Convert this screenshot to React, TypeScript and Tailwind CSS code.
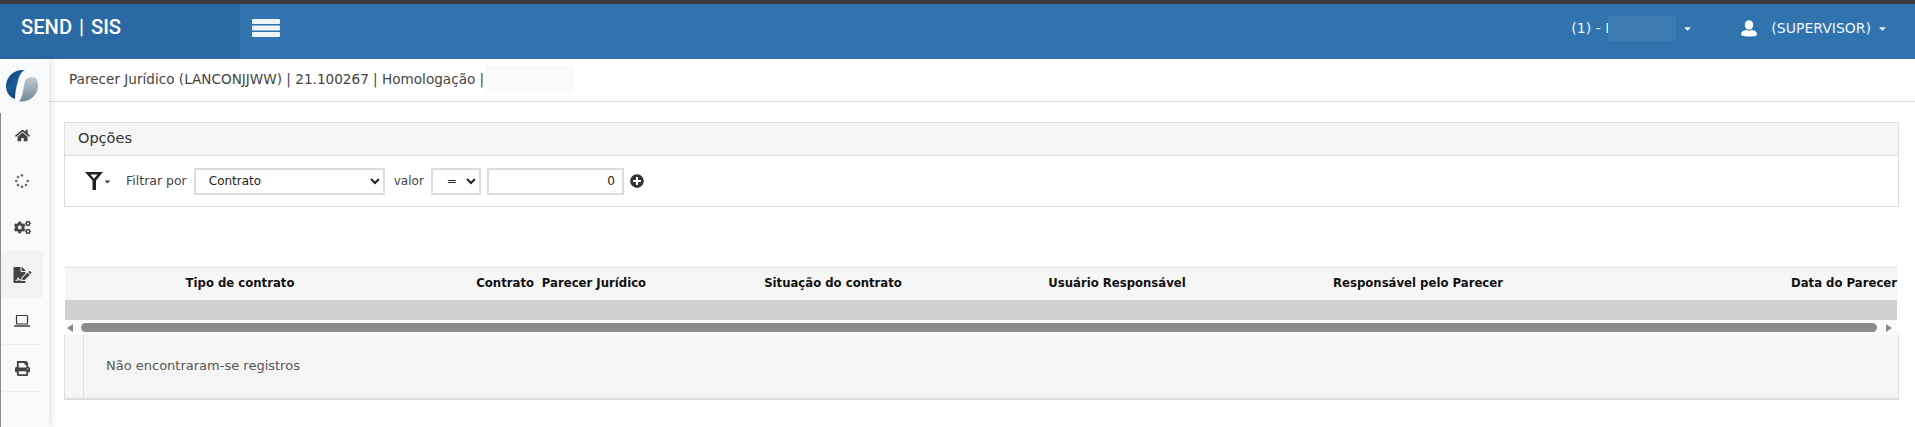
import React from "react";
import { FaHome, FaSpinner, FaCogs, FaFileSignature, FaPrint, FaPlusCircle, FaCaretDown } from "react-icons/fa";

function Logo() {
  return (
    <svg width="32" height="33" viewBox="0 0 32 33">
      <defs>
        <linearGradient id="lb" x1="0" y1="0" x2="0.6" y2="1">
          <stop offset="0" stopColor="#0f3f78" />
          <stop offset="0.55" stopColor="#1c5c98" />
          <stop offset="1" stopColor="#0c3a6c" />
        </linearGradient>
        <linearGradient id="lg" x1="0" y1="0" x2="0" y2="1">
          <stop offset="0" stopColor="#c3ccd3" />
          <stop offset="1" stopColor="#6f8796" />
        </linearGradient>
      </defs>
      <path d="M19 1C8 0 0 8 0 17c0 6 3 11 9 13 0-6 1-12 3-18 1-5 3-9 7-11z" fill="url(#lb)" />
      <path d="M13 32.500c10 1 19-6 19-15.500 0-3-.5-5-2-8-3-1-7-1-10 1-2 4-2 8-3 12-.5 4-2 8-4 10.500z" fill="url(#lg)" />
    </svg>
  );
}

function SideItem({ children, active, line, h = "h-[47px]" }: { children: React.ReactNode; active?: boolean; line?: boolean; h?: string }) {
  return (
    <div className={`${h} w-[42px] flex items-center justify-center text-[#444] ${active ? "bg-[#f3f3f3] text-[#111]" : ""} ${line ? "border-b border-[#eeeeee]" : ""}`}>
      {children}
    </div>
  );
}

function Funnel() {
  return (
    <svg width="18" height="18" viewBox="0 0 18 18">
      <path d="M0 0h18L11 8.500V18H7.500V8.500zM5.500 2.500 9 6.800l3.500-4.300z" fill="#222" fillRule="evenodd" />
    </svg>
  );
}

function UserIcon() {
  return (
    <svg width="16" height="17" viewBox="0 0 16 17">
      <ellipse cx="8" cy="5" rx="4.200" ry="4.800" fill="#fff" />
      <path d="M0 14.500c0-3 2.500-4 5-4.500 1.500 1 4.500 1 6 0 2.500.5 5 1.500 5 4.500 0 1-2 2-8 2s-8-1-8-2z" fill="#fff" />
    </svg>
  );
}

function Burger() {
  return (
    <svg width="28" height="18" viewBox="0 0 28 18" fill="#eef3f8">
      <rect width="28" height="5" rx="1" />
      <rect y="6.500" width="28" height="5" rx="1" />
      <rect y="13" width="28" height="5" rx="1" />
    </svg>
  );
}

function LaptopIcon() {
  return (
    <svg width="16" height="14" viewBox="0 0 16 14" fill="none" stroke="#333">
      <rect x="2.500" y="1.500" width="11" height="8.500" rx="1" strokeWidth="1.200" />
      <path d="M0 12h16" strokeWidth="1.400" />
    </svg>
  );
}

export default function App() {
  return (
    <div className="w-[1915px] h-[427px] overflow-hidden bg-white flex flex-col text-[#444] font-['DejaVu_Sans',sans-serif]">
      <div className="h-1 bg-[#3b3b3b]" />
      <header className="h-[55px] bg-[#3173af] flex text-white">
        <div className="w-[240px] h-full bg-[#2b69a5] pl-[21px] pb-[7px] flex items-center">
          <span className="font-['Roboto',sans-serif] font-medium text-[21px] [word-spacing:2px] whitespace-pre origin-left scale-x-[0.96]">SEND | SIS</span>
        </div>
        <div className="pl-[12px] pb-[8px] flex items-center">
          <Burger />
        </div>
        <div className="flex-1" />
        <div className="flex items-center pb-[6px] text-[14px] text-[#eef3f8]">
          <span className="w-[37px] whitespace-nowrap overflow-hidden">(1) - I</span>
          <span className="w-[68px] h-[25px] bg-[#3f7bb3]" />
          <FaCaretDown className="w-[11px] h-[11px] ml-[6px]" />
          <span className="ml-[48px]"><UserIcon /></span>
          <span className="ml-[14px]">(SUPERVISOR)</span>
          <FaCaretDown className="w-[11px] h-[11px] ml-[6px] mr-[27px]" />
        </div>
      </header>
      <div className="flex-1 flex min-h-0">
        <aside className="w-[49px] shrink-0 bg-[#f9fafc] shadow-[2px_0_8px_rgba(0,0,0,0.12)] z-10 flex flex-col">
          <div className="h-[54px] pl-[6px] pt-[10px]"><Logo /></div>
          <div className="border-l border-[#8c8c8c] flex-1">
            <SideItem h="h-[44px]"><FaHome className="w-[15px] h-[15px]" /></SideItem>
            <SideItem><FaSpinner className="w-[14px] h-[14px] text-[#666]" /></SideItem>
            <SideItem><FaCogs className="w-[17px] h-[15px]" /></SideItem>
            <SideItem active><FaFileSignature className="w-[19px] h-[16px]" /></SideItem>
            <SideItem line><LaptopIcon /></SideItem>
            <SideItem line><FaPrint className="w-[15px] h-[15px]" /></SideItem>
          </div>
        </aside>
        <main className="flex-1 min-w-0">
          <div className="h-[43px] border-b border-[#dddddd] pl-[20px] pb-[2px] flex items-center text-[13.6px] whitespace-pre">
            <span>Parecer Jurídico (LANCONJJWW) | 21.100267 | Homologação |</span>
            <span className="w-[88px] h-[27px] ml-[2px] bg-[#fafafa]" />
          </div>
          <section className="ml-[15px] mr-[16px] mt-[20px] border border-[#dddddd]">
            <div className="h-[33px] bg-[#f5f5f5] border-b border-[#dddddd] pl-[13px] pb-[1px] flex items-center text-[14.5px] text-[#333]">Opções</div>
            <div className="h-[50px] flex items-center pl-[20px]">
              <Funnel />
              <FaCaretDown className="w-[9px] h-[9px] text-[#444]" />
              <label className="ml-[14px] text-[12.5px]">Filtrar por</label>
              <select className="ml-[7px] w-[191px] h-[27px] border-2 border-[#dddddd] bg-white pl-[9px] text-[12px] text-[#222] outline-none">
                <option>Contrato</option>
              </select>
              <label className="ml-[9px] text-[12px]">valor</label>
              <select className="ml-[7px] w-[50px] h-[27px] border-2 border-[#dddddd] bg-white pl-[10px] text-[12px] text-[#222] outline-none">
                <option>=</option>
              </select>
              <input readOnly value="0" className="ml-[6px] w-[137px] h-[27px] border-2 border-[#dddddd] px-[7px] text-right text-[12px] text-[#222] outline-none" />
              <FaPlusCircle className="ml-[6px] w-[14px] h-[14px] text-[#333]" />
            </div>
          </section>
          <section className="ml-[15px] mr-[16px] mt-[60px]">
            <div className="ml-px mr-[2px] h-[33px] pb-[1px] bg-[#f6f6f6] border-t border-[#dddddd] flex items-center text-[11.7px] font-bold text-[#111] whitespace-nowrap">
              <div className="w-[350px] text-center">Tipo de contrato</div>
              <div className="w-[119px] text-right">Contrato</div>
              <div className="w-[120px] text-center">Parecer Jurídico</div>
              <div className="w-[358px] text-center">Situação do contrato</div>
              <div className="w-[210px] text-center">Usuário Responsável</div>
              <div className="w-[392px] text-center">Responsável pelo Parecer</div>
              <div className="flex-1 text-right">Data do Parecer</div>
            </div>
            <div className="ml-px mr-[2px] h-[20px] bg-[#d1d1d1]" />
            <div className="ml-px mr-[2px] h-[15px] bg-[#fbfbfb] flex items-center">
              <svg width="6" height="8" viewBox="0 0 6 8" className="ml-[2px]"><path d="M6 0v8L0 4z" fill="#8a8a8a" /></svg>
              <div className="ml-[8px] w-[1796px] h-[9px] rounded-full bg-[#8c8c8c]" />
              <svg width="6" height="8" viewBox="0 0 6 8" className="ml-[9px]"><path d="M0 0v8l6-4z" fill="#8a8a8a" /></svg>
            </div>
            <div className="h-[65px] bg-[#f5f5f5] border-x border-b-2 border-[#dddddd] flex">
              <div className="w-[19px] border-r border-[#dddddd]" />
              <div className="pl-[22px] pt-[21px] text-[13px] text-[#555]">Não encontraram-se registros</div>
            </div>
          </section>
        </main>
      </div>
    </div>
  );
}
